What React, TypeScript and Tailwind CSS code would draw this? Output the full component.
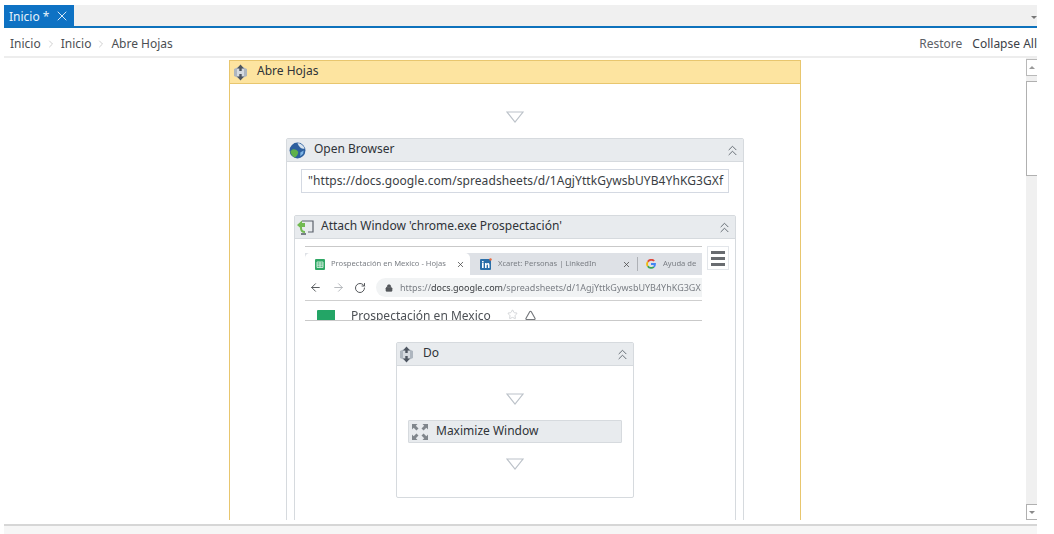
import React from "react";
import { ChevronsUp, ChevronRight, X, ArrowLeft, ArrowRight, RotateCw, Lock, Star, Triangle } from "lucide-react";

const SeqIcon = () => (
  <svg width="15" height="17" viewBox="0 0 15 17" className="shrink-0">
    <path d="M1 5 L7.5 2 L14 5 V12 L7.5 15 L1 12 Z" fill="#aeb6bf" />
    <path d="M4 5 L7.5 3.5 L11 5 V12 L7.5 13.5 L4 12 Z" fill="#d5dae0" />
    <path d="M7.5 0.5 L11 4.5 H8.7 V7 H6.3 V4.5 H4 Z" fill="#4d5560" />
    <path d="M7.5 16.5 L11 12.5 H8.7 V10 H6.3 V12.5 H4 Z" fill="#4d5560" />
  </svg>
);

const GlobeIcon = () => (
  <svg width="17" height="17" viewBox="0 0 18 18" className="shrink-0">
    <circle cx="9" cy="9" r="8.4" fill="#2d5f9e" />
    <path d="M1.5 10 C4 6.5 7 7.5 9.5 10 C10.5 12 8 15.5 6 16.5 C4 15.5 2 13 1.5 10 Z" fill="#5fb04a" />
    <path d="M9 1.5 C12 1 15.5 4 16.5 7 C14 8 11 6 9 1.5 Z" fill="#d8e4ef" />
    <path d="M12 11 L15.5 9 L15 12.5 L12 15 Z" fill="#7fb6e6" />
  </svg>
);

const AttachIcon = () => (
  <svg width="18" height="16" viewBox="0 0 18 16" className="shrink-0">
    <path d="M6 2 H17 V13 H12" fill="none" stroke="#5b626c" strokeWidth="1.2" />
    <path d="M1 6 L6 1.5 V4 H9 V8 H6 V10.5 Z" fill="#72ba52" />
    <path d="M5 9 C5 12 6.5 13 9 13" fill="none" stroke="#72ba52" strokeWidth="2" />
    <path d="M5 15 H10" stroke="#4b525c" strokeWidth="1.4" />
  </svg>
);

const MaxIcon = () => (
  <svg width="18" height="18" viewBox="0 0 18 18" className="shrink-0" fill="#80868c">
    <path d="M1 1 H6.5 L4.8 2.7 L7.5 5.4 L5.4 7.5 L2.7 4.8 L1 6.5 Z" />
    <path d="M17 1 H11.5 L13.2 2.7 L10.5 5.4 L12.6 7.5 L15.3 4.8 L17 6.5 Z" />
    <path d="M1 17 H6.5 L4.8 15.3 L7.5 12.6 L5.4 10.5 L2.7 13.2 L1 11.5 Z" />
    <path d="M17 17 H11.5 L13.2 15.3 L10.5 12.6 L12.6 10.5 L15.3 13.2 L17 11.5 Z" />
  </svg>
);

const Drop = () => (
  <svg width="18" height="12" viewBox="0 0 18 12" className="block shrink-0">
    <path d="M1 1 H17 L9 11 Z" fill="#fff" stroke="#bcc2c9" strokeWidth="1.2" />
  </svg>
);

const Collapse = () => <ChevronsUp size={17} strokeWidth={1.3} className="text-[#5d646c] shrink-0" />;

const SheetIcon = () => (
  <svg width="10" height="11" viewBox="0 0 10 11" className="shrink-0">
    <rect width="10" height="11" rx="1" fill="#2fa865" />
    <path d="M2 3 H8 V8.5 H2 Z M2 5 H8 M2 6.8 H8 M5 3 V8.5" fill="none" stroke="#e6f5ec" strokeWidth="0.8" />
  </svg>
);

const LinkedInIcon = () => (
  <svg width="12" height="12" viewBox="0 0 12 12" className="shrink-0">
    <rect width="11" height="11" y="1" rx="1" fill="#2a6ea8" />
    <rect x="2" y="5" width="1.6" height="5" fill="#fff" />
    <rect x="2" y="3" width="1.6" height="1.4" fill="#fff" />
    <path d="M5 5 H6.6 V6 C7.4 4.6 9.5 4.8 9.5 7 V10 H8 V7.4 C8 6 6.6 6.1 6.6 7.4 V10 H5 Z" fill="#fff" />
    <circle cx="10.5" cy="1.5" r="1.2" fill="#e8663a" />
  </svg>
);

const GIcon = () => (
  <svg width="10" height="10" viewBox="0 0 11 11" className="shrink-0" fill="none" strokeWidth="2">
    <path d="M9 2.2 A4.4 4.4 0 0 0 2 3" stroke="#e0483a" />
    <path d="M2 3 A4.4 4.4 0 0 0 2 8" stroke="#f2b90f" />
    <path d="M2 8 A4.4 4.4 0 0 0 8.6 8.6" stroke="#36a553" />
    <path d="M8.6 8.6 A4.4 4.4 0 0 0 9.9 5.5 H5.5" stroke="#4285f4" />
  </svg>
);

const Shot = () => (
  <div className="w-[397px] h-[75px] overflow-hidden border-t border-b border-[#c9c9c9] bg-white blur-[0.5px] text-[#7a7e84] shrink-0">
    <div className="h-[6px] bg-white" />
    <div className="flex h-[22px] bg-[#dee1e6] items-center">
      <div className="flex items-center gap-[6px] w-[165px] h-full bg-white rounded-t-[5px] pl-[10px] pr-[5px] text-[7.6px] whitespace-nowrap overflow-hidden shrink-0">
        <SheetIcon />
        <span className="flex-1 overflow-hidden">Prospectación en Mexico - Hojas</span>
        <X size={9} strokeWidth={2} className="text-[#444] shrink-0" />
      </div>
      <div className="flex items-center gap-[6px] w-[167px] pl-[10px] pr-[6px] text-[7.6px] whitespace-nowrap shrink-0">
        <LinkedInIcon />
        <span className="flex-1">Xcaret: Personas | LinkedIn</span>
        <X size={9} strokeWidth={2} className="text-[#444] shrink-0" />
      </div>
      <div className="w-px h-[14px] bg-[#aeb1b6] shrink-0" />
      <div className="flex items-center gap-[7px] pl-[8px] text-[7.6px] whitespace-nowrap flex-1 min-w-0 overflow-hidden">
        <GIcon />
        <span>Ayuda de</span>
      </div>
    </div>
    <div className="flex h-[26px] items-center pl-[4px] border-b border-[#cfcfcf]">
      <ArrowLeft size={13} strokeWidth={1.8} className="text-[#55585c] shrink-0" />
      <ArrowRight size={13} strokeWidth={1.8} className="text-[#b5b8bc] shrink-0 ml-[10px]" />
      <RotateCw size={12} strokeWidth={2} className="text-[#55585c] shrink-0 ml-[9px]" />
      <div className="flex-1 min-w-0 ml-[10px] h-[19px] bg-[#f1f3f4] rounded-l-full flex items-center pl-[9px] gap-[7px] text-[9px] whitespace-nowrap overflow-hidden">
        <Lock size={8} fill="currentColor" className="text-[#55585c] shrink-0" />
        <span>https://<span className="text-[#3a3d40]">docs.google.com</span>/spreadsheets/d/1AgjYttkGywsbUYB4YhKG3GX</span>
      </div>
    </div>
    <div className="flex h-[19px] items-start overflow-hidden">
      <div className="w-[18px] h-[20px] mt-[9px] ml-[12px] bg-[#23a566] rounded-tl-[1px] shrink-0" />
      <span className="ml-[16px] mt-[7px] text-[12px] leading-[16px] text-[#4d5156] whitespace-nowrap">Prospectación en Mexico</span>
      <Star size={11} className="text-[#d0d2d5] ml-[16px] mt-[8px] shrink-0" />
      <Triangle size={11} strokeWidth={2.5} className="text-[#75787c] ml-[7px] mt-[9px] shrink-0" />
    </div>
  </div>
);

export default function App() {
  return (
    <div className="w-[1054px] h-[534px] bg-white overflow-hidden pt-[5px] pl-[4px] pr-[17px] text-[#3c4147] text-[12px] [font-family:'Noto_Sans',sans-serif]">
      <div className="flex h-[23px] bg-[#f0f0f0] border-b-2 border-[#0e72bc] relative">
        <div className="w-[70px] h-[21px] bg-[#0e72c4] text-[#e8f2fb] flex items-center pl-[5px] gap-[5px] text-[12px]">
          <span className="pt-[2px]">Inicio *</span>
          <X size={16} strokeWidth={1.4} />
        </div>
        <div className="absolute right-0 top-[11px] w-0 h-0 border-l-[3px] border-r-[3px] border-t-[3px] border-l-transparent border-r-transparent border-t-[#777]" />
      </div>
      <div className="flex items-center justify-between h-[30px] pl-[6px] border-b-2 border-[#ededed] pt-[4px]">
        <div className="flex items-center gap-[4px] text-[#4c4f53]">
          <span>Inicio</span>
          <ChevronRight size={12} className="text-[#d0d0d0]" />
          <span>Inicio</span>
          <ChevronRight size={12} className="text-[#d0d0d0]" />
          <span>Abre Hojas</span>
        </div>
        <div className="flex gap-[10px] whitespace-nowrap">
          <span className="text-[#5c6066]">Restore</span>
          <span>Collapse All</span>
        </div>
      </div>
      <div className="flex h-[462px]">
        <div className="flex-1 flex justify-center pt-[2px] overflow-hidden">
          <div className="w-[572px] h-[460px] border-x border-t border-[#e8c66e] shrink-0 overflow-hidden">
            <div className="h-[23px] bg-[#fde4a0] border-b border-[#e8c66e] flex items-center pl-[3px] gap-[9px]">
              <SeqIcon />
              <span className="text-[#2f3338] pb-[2px]">Abre Hojas</span>
            </div>
            <div className="flex flex-col items-center pt-[27px]">
              <Drop />
              <div className="w-[458px] border border-[#d6dade] rounded-[2px] mt-[15px] h-[400px] flex flex-col items-center shrink-0">
                <div className="w-full h-[23px] bg-[#e8ebee] border-b border-[#d6dade] flex items-center pl-[2px] pr-[2px] gap-[8px] text-[#2f3338]">
                  <GlobeIcon />
                  <span className="flex-1 pb-[2px]">Open Browser</span>
                  <Collapse />
                </div>
                <div className="w-[428px] h-[24px] border border-[#d4d9e2] mt-[7px] flex items-center pl-[6px] text-[#3a3e44] tracking-[0.08px] overflow-hidden whitespace-nowrap shrink-0">
                  "https://docs.google.com/spreadsheets/d/1AgjYttkGywsbUYB4YhKG3GXf
                </div>
                <div className="w-[442px] mt-[22px] border border-[#d6dade] rounded-[2px] flex-1 flex flex-col items-center">
                  <div className="w-full h-[23px] bg-[#e8ebee] border-b border-[#d6dade] flex items-center pl-[1px] pr-[2px] gap-[7px] text-[#2f3338] shrink-0">
                    <AttachIcon />
                    <span className="flex-1 pb-[2px]">Attach Window 'chrome.exe Prospectación'</span>
                    <Collapse />
                  </div>
                  <div className="w-full flex pl-[10px] pt-[7px] gap-[5px]">
                    <Shot />
                    <div className="w-[22px] h-[24px] border border-[#e3e6ea] flex flex-col justify-center items-center gap-[3px] shrink-0">
                      <div className="w-[14px] h-[3px] bg-[#696c70]" />
                      <div className="w-[14px] h-[3px] bg-[#696c70]" />
                      <div className="w-[14px] h-[3px] bg-[#696c70]" />
                    </div>
                  </div>
                  <div className="w-[238px] h-[156px] mt-[21px] border border-[#d6dade] rounded-[2px] flex flex-col items-center shrink-0">
                    <div className="w-full h-[23px] bg-[#e8ebee] border-b border-[#d6dade] flex items-center pl-[2px] pr-[2px] gap-[9px] text-[#2f3338]">
                      <SeqIcon />
                      <span className="flex-1 pb-[2px]">Do</span>
                      <Collapse />
                    </div>
                    <div className="mt-[27px]"><Drop /></div>
                    <div className="w-[214px] h-[23px] mt-[15px] bg-[#e8ebee] border border-[#d6dade] rounded-[1px] flex items-center pl-[2px] gap-[7px] text-[#2f3338]">
                      <MaxIcon />
                      <span className="pb-[2px]">Maximize Window</span>
                    </div>
                    <div className="mt-[15px]"><Drop /></div>
                  </div>
                </div>
              </div>
            </div>
          </div>
        </div>
        <div className="w-[11px] h-[462px] bg-[#f0f0f0] flex flex-col shrink-0 pt-[1px]">
          <div className="h-[17px] bg-white border border-r-0 border-[#b9b9b9] flex items-center justify-center shrink-0">
            <div className="w-0 h-0 border-l-[3px] border-r-[3px] border-b-[3px] border-l-transparent border-r-transparent border-b-[#9a9a9a]" />
          </div>
          <div className="h-[95px] mt-[5px] bg-white border border-r-0 border-[#b0b0b0] shrink-0" />
          <div className="flex-1" />
          <div className="h-[16px] bg-white border border-r-0 border-[#b0b0b0] flex items-center justify-center shrink-0">
            <div className="w-0 h-0 border-l-[3px] border-r-[3px] border-t-[3px] border-l-transparent border-r-transparent border-t-[#8a8a8a]" />
          </div>
        </div>
      </div>
      <div className="h-[2px] mt-[4px] bg-[#d6d6d6]" />
      <div className="h-[8px] bg-[#f6f6f6]" />
    </div>
  );
}
